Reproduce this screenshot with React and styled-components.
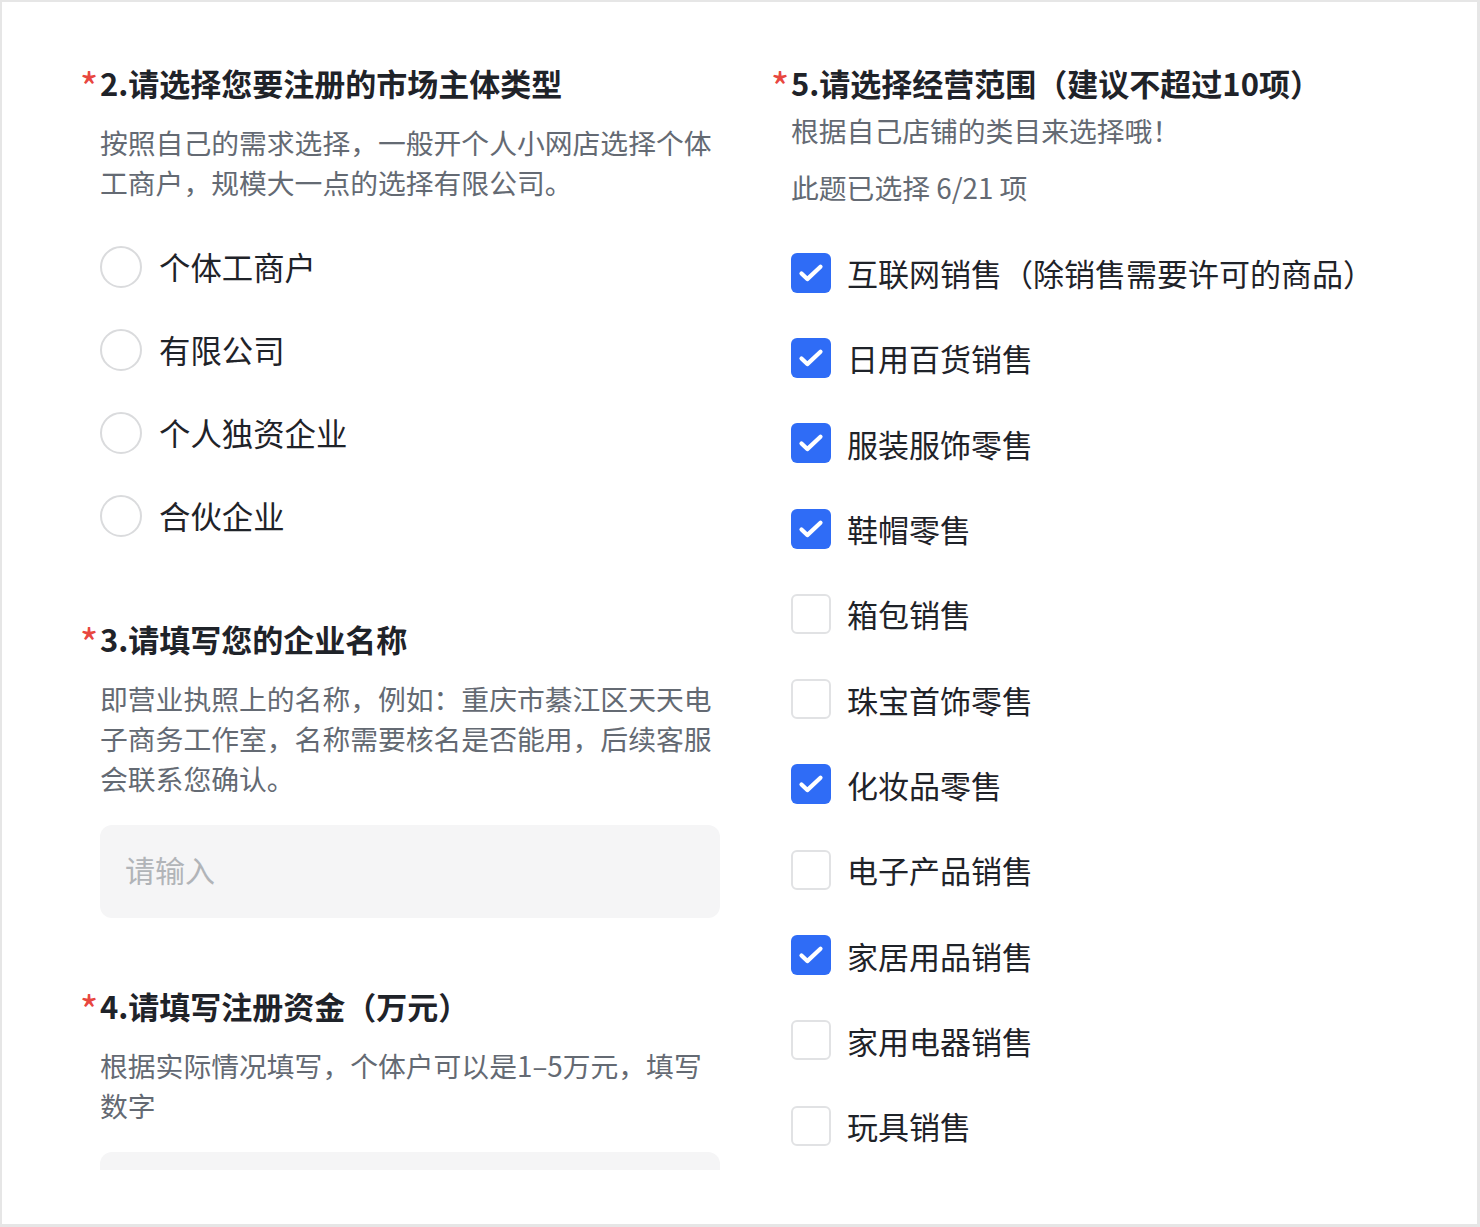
import React from "react";
import styled, { createGlobalStyle } from "styled-components";

const GlobalStyle = createGlobalStyle`
  html, body {
    margin: 0;
    padding: 0;
    background: #ffffff;
  }
  body {
    font-family: "Noto Sans CJK SC", "Noto Sans", sans-serif;
    color: #1f2329;
  }
`;

const entityTypes = ["个体工商户", "有限公司", "个人独资企业", "合伙企业"];

const scopes = [
  { label: "互联网销售（除销售需要许可的商品）", checked: true },
  { label: "日用百货销售", checked: true },
  { label: "服装服饰零售", checked: true },
  { label: "鞋帽零售", checked: true },
  { label: "箱包销售", checked: false },
  { label: "珠宝首饰零售", checked: false },
  { label: "化妆品零售", checked: true },
  { label: "电子产品销售", checked: false },
  { label: "家居用品销售", checked: true },
  { label: "家用电器销售", checked: false },
  { label: "玩具销售", checked: false },
];

const Check = () => (
  <svg width="40" height="40" viewBox="0 0 40 40" fill="none">
    <path
      d="M10.5 20.5l5.8 5.6L29.5 13.8"
      stroke="#fff"
      strokeWidth="4.2"
      strokeLinecap="round"
      strokeLinejoin="round"
    />
  </svg>
);

export default function App() {
  return (
    <>
      <GlobalStyle />
      <Frame>
        <Clip>
          <Columns>
            <Column>
              <Question>
                <Title><Star>*</Star>2.请选择您要注册的市场主体类型</Title>
                <Desc>按照自己的需求选择，一般开个人小网店选择个体工商户，规模大一点的选择有限公司。</Desc>
                <Options>
                  {entityTypes.map((t) => (
                    <RadioRow key={t}>
                      <Radio />
                      <OptionText>{t}</OptionText>
                    </RadioRow>
                  ))}
                </Options>
              </Question>

              <Question $top={62}>
                <Title><Star>*</Star>3.请填写您的企业名称</Title>
                <Desc>即营业执照上的名称，例如：重庆市綦江区天天电子商务工作室，名称需要核名是否能用，后续客服会联系您确认。</Desc>
                <Input placeholder="请输入" readOnly />
              </Question>

              <Question $top={68}>
                <Title><Star>*</Star>4.请填写注册资金（万元）</Title>
                <Desc>根据实际情况填写，个体户可以是1–5万元，填写数字</Desc>
                <Input readOnly />
              </Question>
            </Column>

            <Column>
              <Question>
                <Title><Star>*</Star>5.请选择经营范围（建议不超过10项）</Title>
                <SubDesc>根据自己店铺的类目来选择哦！</SubDesc>
                <Count>此题已选择 6/21 项</Count>
                <Checks>
                  {scopes.map((s) => (
                    <CheckRow key={s.label}>
                      <Box $checked={s.checked}>{s.checked && <Check />}</Box>
                      <CheckText>{s.label}</CheckText>
                    </CheckRow>
                  ))}
                </Checks>
              </Question>
            </Column>
          </Columns>
        </Clip>
      </Frame>
    </>
  );
}

const Frame = styled.div`
  width: 1480px;
  height: 1227px;
  box-sizing: border-box;
  border-style: solid;
  border-color: #e6e6e6;
  border-width: 2px 3px 3px 2px;
  background: #fff;
`;

const Clip = styled.div`
  height: 1168px;
  overflow: hidden;
`;

const Columns = styled.div`
  display: grid;
  grid-template-columns: 620px 1fr;
  column-gap: 71px;
  padding: 61px 0 0 98px;
`;

const Column = styled.div`
  display: flex;
  flex-direction: column;
`;

const Question = styled.section`
  margin-top: ${(p) => p.$top || 0}px;
`;

const Title = styled.h2`
  margin: 0;
  height: 40px;
  font-size: 31px;
  line-height: 40px;
  font-weight: 700;
  color: #1f2329;
  white-space: nowrap;
`;

const Star = styled.span`
  display: inline-block;
  width: 22px;
  margin-left: -22px;
  color: #e8473f;
  font-size: 40px;
  line-height: 0;
  font-weight: 400;
  vertical-align: -7px;
  text-align: center;
`;

const Desc = styled.p`
  margin: 19px 0 0;
  font-size: 27.8px;
  line-height: 40px;
  color: #646a73;
`;

const SubDesc = styled(Desc)`
  margin-top: 7px;
`;

const Count = styled(Desc)`
  margin-top: 17px;
`;

const Options = styled.div`
  margin-top: 23px;
  display: flex;
  flex-direction: column;
`;

const RadioRow = styled.label`
  display: flex;
  align-items: center;
  height: 83px;
  gap: 17px;
`;

const Radio = styled.span`
  width: 42px;
  height: 42px;
  box-sizing: border-box;
  border-radius: 50%;
  border: 2px solid #dadbdd;
  background: #fff;
`;

const OptionText = styled.span`
  font-size: 31.4px;
  color: #1f2329;
`;

const Input = styled.input`
  display: block;
  margin-top: 27px;
  width: 100%;
  height: 93px;
  box-sizing: border-box;
  border: none;
  outline: none;
  border-radius: 12px;
  background: #f5f5f6;
  padding: 0 25px 5px;
  font-family: inherit;
  font-size: 30px;
  color: #1f2329;

  &::placeholder {
    color: #b1b4b8;
  }
`;

const Checks = styled.div`
  margin-top: 23px;
  display: flex;
  flex-direction: column;
`;

const CheckRow = styled.label`
  display: flex;
  align-items: center;
  height: 85.3px;
  gap: 16px;
`;

const Box = styled.span`
  display: flex;
  align-items: center;
  justify-content: center;
  width: 40px;
  height: 40px;
  box-sizing: border-box;
  border-radius: 6px;
  border: ${(p) => (p.$checked ? "none" : "2px solid #e1e2e4")};
  background: ${(p) => (p.$checked ? "#2f6cf6" : "#fff")};
`;

const CheckText = styled.span`
  font-size: 31px;
  color: #1f2329;
  white-space: nowrap;
`;
